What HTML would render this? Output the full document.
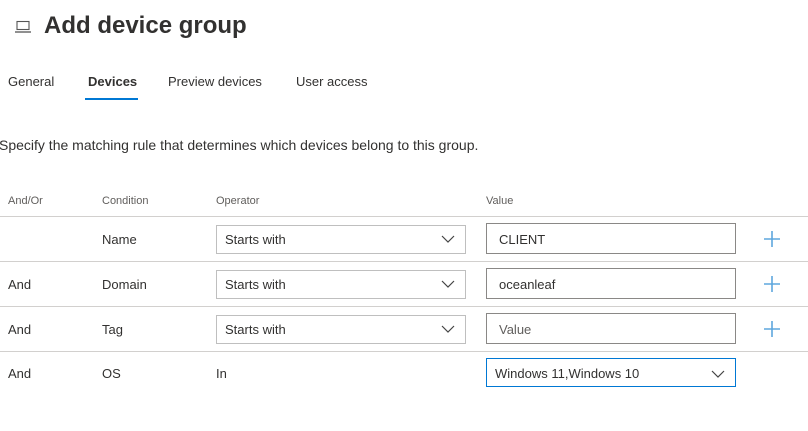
<!DOCTYPE html>
<html><head><style>
body{margin:0;width:808px;height:431px;background:#fff;font-family:"Liberation Sans",sans-serif;color:#323130;position:relative;overflow:hidden}
.a{position:absolute;white-space:nowrap}
.t{font-size:13px}
.h{font-size:11px;color:#605e5c}
.line{position:absolute;left:0;width:808px;height:1px;background:#d2d0ce}
.dd{position:absolute;left:216px;width:248px;height:27px;border:1px solid #bfbfbf;box-sizing:content-box}
.in{position:absolute;left:486px;width:248px;height:29px;border:1px solid #8a8886}
.chev{position:absolute;right:10px;top:9px}
.plus{position:absolute;left:763px}
</style></head><body>
<svg class="a" style="left:14px;top:20px" width="18" height="14" viewBox="0 0 18 14"><rect x="3" y="1.5" width="12" height="8" fill="none" stroke="#555" stroke-width="1.1"/><path d="M1 12h16" stroke="#555" stroke-width="1.3"/></svg>
<div class="a" style="left:44px;top:12px;font-size:24px;font-weight:bold;color:#323130">Add device group</div>
<div class="a t" style="left:8px;top:74px">General</div>
<div class="a t" style="left:88px;top:74px;font-weight:bold;color:#323130">Devices</div>
<div class="a" style="left:85px;top:98px;width:53px;height:2px;background:#0078d4"></div>
<div class="a t" style="left:168px;top:74px">Preview devices</div>
<div class="a t" style="left:296px;top:74px">User access</div>
<div class="a" style="left:-1px;top:137px;font-size:14px">Specify the matching rule that determines which devices belong to this group.</div>
<div class="a h" style="left:8px;top:195px">And/Or</div>
<div class="a h" style="left:102px;top:195px">Condition</div>
<div class="a h" style="left:216px;top:195px">Operator</div>
<div class="a h" style="left:486px;top:195px">Value</div>
<div class="line" style="top:216px"></div>
<div class="line" style="top:261px"></div>
<div class="line" style="top:306px"></div>
<div class="line" style="top:351px"></div>

<div class="a t" style="left:102px;top:232px">Name</div>
<div class="dd" style="top:225px"><span class="a t" style="left:8px;top:6px">Starts with</span><svg class="chev" width="14" height="8"><path d="M1 1l6 6 6-6" fill="none" stroke="#444" stroke-width="1.2"/></svg></div>
<div class="in" style="top:223px"><span class="a t" style="left:12px;top:8px">CLIENT</span></div>
<svg class="a plus" style="top:230px" width="18" height="18"><path d="M9 1v16M1 9h16" stroke="#5ea7dd" stroke-width="1.6"/></svg>

<div class="a t" style="left:8px;top:277px">And</div>
<div class="a t" style="left:102px;top:277px">Domain</div>
<div class="dd" style="top:270px"><span class="a t" style="left:8px;top:6px">Starts with</span><svg class="chev" width="14" height="8"><path d="M1 1l6 6 6-6" fill="none" stroke="#444" stroke-width="1.2"/></svg></div>
<div class="in" style="top:268px"><span class="a t" style="left:12px;top:8px">oceanleaf</span></div>
<svg class="a plus" style="top:275px" width="18" height="18"><path d="M9 1v16M1 9h16" stroke="#5ea7dd" stroke-width="1.6"/></svg>

<div class="a t" style="left:8px;top:322px">And</div>
<div class="a t" style="left:102px;top:322px">Tag</div>
<div class="dd" style="top:315px"><span class="a t" style="left:8px;top:6px">Starts with</span><svg class="chev" width="14" height="8"><path d="M1 1l6 6 6-6" fill="none" stroke="#444" stroke-width="1.2"/></svg></div>
<div class="in" style="top:313px"><span class="a t" style="left:12px;top:8px;color:#605e5c">Value</span></div>
<svg class="a plus" style="top:320px" width="18" height="18"><path d="M9 1v16M1 9h16" stroke="#5ea7dd" stroke-width="1.6"/></svg>

<div class="a t" style="left:8px;top:366px">And</div>
<div class="a t" style="left:102px;top:366px">OS</div>
<div class="a t" style="left:216px;top:366px">In</div>
<div class="in" style="top:358px;height:27px;border-color:#0078d4"><span class="a t" style="left:8px;top:7px">Windows 11,Windows 10</span><svg class="chev" style="top:11px" width="14" height="8"><path d="M1 1l6 6 6-6" fill="none" stroke="#444" stroke-width="1.2"/></svg></div>
</body></html>
